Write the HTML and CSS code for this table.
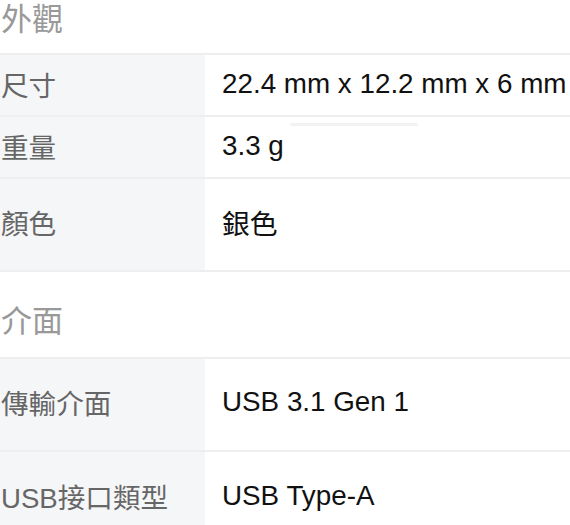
FILE: index.html
```html
<!DOCTYPE html>
<html lang="zh-Hant">
<head>
<meta charset="utf-8">
<title>規格</title>
<link rel="stylesheet" href="styles.css">
</head>
<body>
<div class="specs">
  <div class="group-title first">外觀</div>
  <div class="row short">
    <div class="label">尺寸</div>
    <div class="value">22.4 mm x 12.2 mm x 6 mm</div>
  </div>
  <div class="row short">
    <div class="label">重量</div>
    <div class="value">3.3 g</div>
    <span class="ghost-bar"></span>
  </div>
  <div class="row tall">
    <div class="label">顏色</div>
    <div class="value">銀色</div>
  </div>
  <div class="group-title second">介面</div>
  <div class="row tall">
    <div class="label">傳輸介面</div>
    <div class="value">USB 3.1 Gen 1</div>
  </div>
  <div class="row tall last">
    <div class="label">USB接口類型</div>
    <div class="value">USB Type-A</div>
  </div>
</div>
</body>
</html>
```

FILE: styles.css
```css
html, body {
  margin: 0;
  padding: 0;
  background: #ffffff;
}

body {
  font-family: "Liberation Sans", "Noto Sans CJK TC", Arial, sans-serif;
  width: 570px;
  height: 525px;
  overflow: hidden;
}

.specs {
  display: flex;
  flex-direction: column;
}

.group-title {
  display: flex;
  align-items: flex-end;
  box-sizing: border-box;
  padding-left: 1px;
  font-size: 31px;
  line-height: 36px;
  color: #999999;
  border-bottom: 2px solid #eeeeee;
}

.group-title.first {
  height: 55px;
  padding-bottom: 15px;
}

.group-title.second {
  height: 87px;
  padding-bottom: 17px;
}

.row {
  position: relative;
  display: grid;
  grid-template-columns: 205px 1fr;
  box-sizing: border-box;
  border-bottom: 2px solid #eeeeee;
}

.row.short {
  height: 62px;
}

.row.tall {
  height: 93px;
}

.row.last {
  border-bottom: none;
}

.label {
  display: flex;
  align-items: center;
  padding-left: 1px;
  padding-bottom: 3px;
  background: #f5f6f8;
  font-size: 27.6px;
  color: #666666;
}

.value {
  display: flex;
  align-items: center;
  padding-left: 17px;
  padding-bottom: 3px;
  font-size: 27.8px;
  color: #111111;
  white-space: nowrap;
}

.row.tall .label,
.row.tall .value {
  padding-bottom: 5px;
}

.ghost-bar {
  position: absolute;
  left: 290px;
  top: 6px;
  width: 128px;
  height: 3px;
  border-radius: 2px;
  background: #f2f2f2;
}
```
